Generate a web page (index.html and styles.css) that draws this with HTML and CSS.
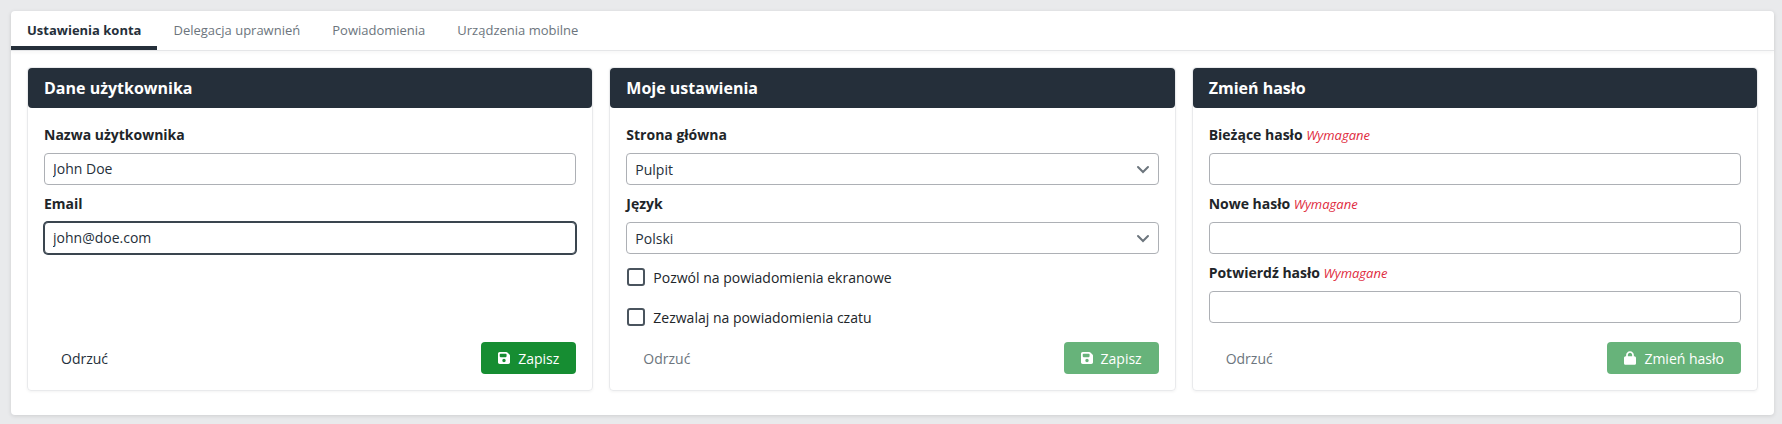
FILE: index.html
```html
<!DOCTYPE html>
<html lang="pl">
<head>
  <meta charset="UTF-8">
  <meta name="viewport" content="width=device-width, initial-scale=1.0">
  <title>Ustawienia konta</title>
  <link rel="stylesheet" href="styles.css">
</head>
<body>
  <main class="panel">
    <nav class="tabs">
      <a href="#account" class="tab active">Ustawienia konta</a>
      <a href="#delegation" class="tab">Delegacja uprawnień</a>
      <a href="#notifications" class="tab">Powiadomienia</a>
      <a href="#devices" class="tab">Urządzenia mobilne</a>
    </nav>

    <div class="cards">
      <!-- User data -->
      <form class="card">
        <h2>Dane użytkownika</h2>
        <div class="card-body">
          <div class="field">
            <label for="username">Nazwa użytkownika</label>
            <input type="text" id="username" value="John Doe">
          </div>
          <div class="field">
            <label for="email">Email</label>
            <input type="text" id="email" class="focused" value="john@doe.com">
          </div>
          <div class="actions">
            <button type="reset" class="btn btn-link">Odrzuć</button>
            <button type="submit" class="btn btn-save">
              <svg class="icon" viewBox="0 0 448 512"><path d="M64 32C29 32 0 61 0 96v320c0 35 29 64 64 64h320c35 0 64-29 64-64V173c0-17-7-33-19-45l-77-77c-12-12-28-19-45-19H64zm0 96c0-18 14-32 32-32h192c18 0 32 14 32 32v64c0 18-14 32-32 32H96c-18 0-32-14-32-32v-64zm160 160a64 64 0 1 1 0 128 64 64 0 1 1 0-128z"/></svg>
              Zapisz
            </button>
          </div>
        </div>
      </form>

      <!-- Preferences -->
      <form class="card">
        <h2>Moje ustawienia</h2>
        <div class="card-body">
          <div class="field">
            <label for="homepage">Strona główna</label>
            <div class="select">
              <select id="homepage">
                <option>Pulpit</option>
              </select>
              <svg class="chevron" viewBox="0 0 16 16"><path d="M3 6l5 5 5-5"/></svg>
            </div>
          </div>
          <div class="field">
            <label for="language">Język</label>
            <div class="select">
              <select id="language">
                <option>Polski</option>
              </select>
              <svg class="chevron" viewBox="0 0 16 16"><path d="M3 6l5 5 5-5"/></svg>
            </div>
          </div>
          <div class="check">
            <input type="checkbox" id="screen-notifications">
            <label for="screen-notifications">Pozwól na powiadomienia ekranowe</label>
          </div>
          <div class="check">
            <input type="checkbox" id="chat-notifications">
            <label for="chat-notifications">Zezwalaj na powiadomienia czatu</label>
          </div>
          <div class="actions">
            <button type="reset" class="btn btn-link" disabled>Odrzuć</button>
            <button type="submit" class="btn btn-save" disabled>
              <svg class="icon" viewBox="0 0 448 512"><path d="M64 32C29 32 0 61 0 96v320c0 35 29 64 64 64h320c35 0 64-29 64-64V173c0-17-7-33-19-45l-77-77c-12-12-28-19-45-19H64zm0 96c0-18 14-32 32-32h192c18 0 32 14 32 32v64c0 18-14 32-32 32H96c-18 0-32-14-32-32v-64zm160 160a64 64 0 1 1 0 128 64 64 0 1 1 0-128z"/></svg>
              Zapisz
            </button>
          </div>
        </div>
      </form>

      <!-- Password -->
      <form class="card">
        <h2>Zmień hasło</h2>
        <div class="card-body">
          <div class="field">
            <label for="current-password">Bieżące hasło <em>Wymagane</em></label>
            <input type="password" id="current-password">
          </div>
          <div class="field">
            <label for="new-password">Nowe hasło <em>Wymagane</em></label>
            <input type="password" id="new-password">
          </div>
          <div class="field">
            <label for="confirm-password">Potwierdź hasło <em>Wymagane</em></label>
            <input type="password" id="confirm-password">
          </div>
          <div class="actions">
            <button type="reset" class="btn btn-link" disabled>Odrzuć</button>
            <button type="submit" class="btn btn-save" disabled>
              <svg class="icon" viewBox="0 0 448 512"><path d="M144 144v48h160v-48c0-44-36-80-80-80s-80 36-80 80zm-64 48v-48C80 64 144 0 224 0s144 64 144 144v48h16c35 0 64 29 64 64v192c0 35-29 64-64 64H64c-35 0-64-29-64-64V256c0-35 29-64 64-64h16z"/></svg>
              Zmień hasło
            </button>
          </div>
        </div>
      </form>
    </div>
  </main>
</body>
</html>
```
FILE: styles.css
```css
* {
  box-sizing: border-box;
}
body {
  margin: 0;
  padding: 11px 8px 9px 11px;
  background-color: #e9eaec;
  color: #212529;
  font-family: "Open Sans", "Noto Sans", sans-serif;
  font-size: 14px;
  line-height: 21px;
}
.panel {
  background: #fff;
  border-radius: 4px;
  box-shadow: 0 1px 4px rgba(0, 0, 0, 0.12);
}
.tabs {
  display: flex;
  border-bottom: 1px solid #e5e6e8;
  box-shadow: 0 2px 3px rgba(0, 0, 0, 0.03);
}
.tab {
  padding: 9px 16px 6px;
  border-bottom: 4px solid transparent;
  color: #6c757d;
  font-size: 13px;
  line-height: 20px;
  text-decoration: none;
}
.tab.active {
  border-bottom-color: #252f3a;
  color: #252f3a;
  font-weight: bold;
}
.cards {
  display: grid;
  grid-template-columns: repeat(3, 1fr);
  gap: 16px;
  padding: 16px 16px 24px;
}
.card {
  display: flex;
  flex-direction: column;
  border: 1px solid #e9eaec;
  border-radius: 4px;
  box-shadow: 0 1px 3px rgba(0, 0, 0, 0.05);
}
.card h2 {
  margin: 0;
  padding: 8px 16px;
  border-radius: 4px;
  background-color: #252f3a;
  color: #fff;
  font-size: 16px;
  line-height: 24px;
}
.card-body {
  flex: 1;
  display: flex;
  flex-direction: column;
  gap: 8px;
  padding: 16px;
}
.field label {
  display: block;
  margin-bottom: 8px;
  font-weight: bold;
}
.field em {
  color: #e02b40;
  font-size: 13px;
  font-weight: normal;
  line-height: 1;
}
.field input,
.field select {
  display: block;
  width: 100%;
  height: 32px;
  padding: 0 8px;
  border: 1px solid #adb0b5;
  border-radius: 4px;
  background: #fff;
  color: #252f3a;
  font: inherit;
  outline: none;
}
.field input {
  padding-bottom: 2px;
}
.field input:focus,
.field input.focused {
  border-color: #3a454f;
  box-shadow: 0 0 0 1px #3a454f;
}
.select {
  position: relative;
}
.field select {
  appearance: none;
}
.chevron {
  position: absolute;
  top: 8px;
  right: 8px;
  width: 16px;
  height: 16px;
  fill: none;
  stroke: #6c757d;
  stroke-width: 2;
  stroke-linecap: round;
  pointer-events: none;
}
.check {
  display: flex;
  align-items: center;
  gap: 8px;
  height: 32px;
  padding: 0 1px 2px;
}
.check input {
  appearance: none;
  width: 18px;
  height: 18px;
  margin: 0;
  border: 2px solid #4a545e;
  border-radius: 3px;
}
.actions {
  display: flex;
  justify-content: space-between;
  margin-top: auto;
}
.btn {
  display: flex;
  align-items: center;
  gap: 8px;
  height: 32px;
  padding: 0 16px;
  border: 1px solid transparent;
  border-radius: 4px;
  font: inherit;
}
.btn-link {
  background: none;
  color: #252f3a;
}
.btn-link:disabled {
  color: #6c757d;
}
.btn-save {
  background-color: #168d32;
  color: #fff;
}
.btn-save:disabled {
  background-color: #67b37a;
}
.icon {
  width: 12px;
  height: 14px;
  fill: currentColor;
}
```
